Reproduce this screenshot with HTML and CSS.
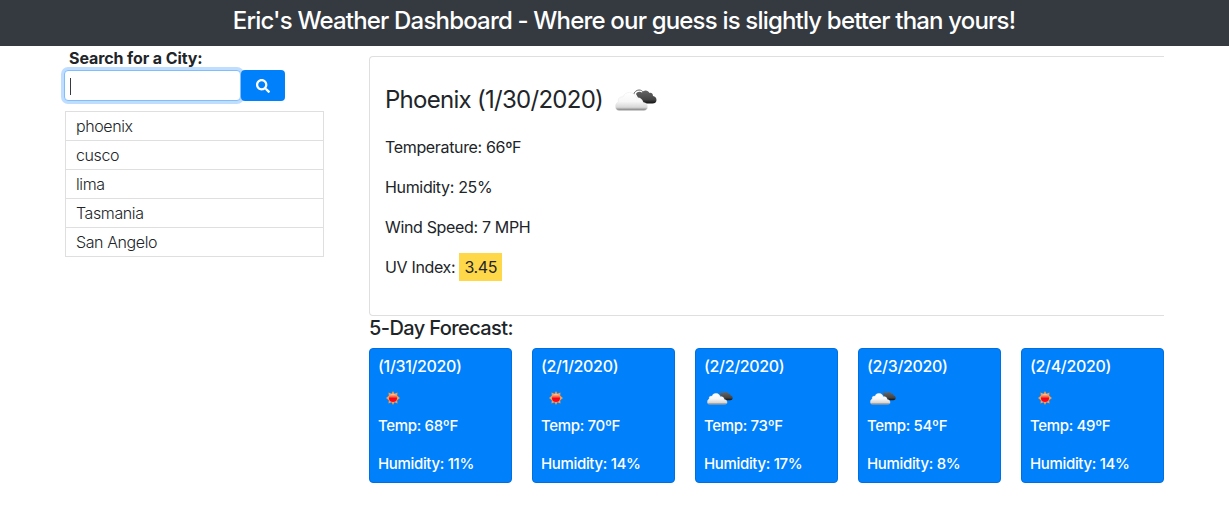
FILE: index.html
```
<!DOCTYPE html>
<html lang="en">
<head>
<meta charset="utf-8">
<title>Eric's Weather Dashboard</title>
<link rel="stylesheet" href="styles.css">
</head>
<body>
<svg class="defs" aria-hidden="true">
  <defs>
    <linearGradient id="white-cloud" x1="0" y1="0" x2="0" y2="1">
      <stop offset="0" stop-color="#fff"/>
      <stop offset=".5" stop-color="#f7f7f7"/>
      <stop offset=".82" stop-color="#d8d8d8"/>
      <stop offset="1" stop-color="#777"/>
    </linearGradient>
    <linearGradient id="dark-cloud" x1="0" y1="0" x2="0" y2="1">
      <stop offset="0" stop-color="#666"/>
      <stop offset=".7" stop-color="#444"/>
      <stop offset="1" stop-color="#111"/>
    </linearGradient>
    <linearGradient id="sun-core" x1="0" y1="0" x2="0" y2="1">
      <stop offset="0" stop-color="#ffd0a0"/>
      <stop offset=".35" stop-color="#fb6040"/>
      <stop offset=".55" stop-color="#f8001c"/>
      <stop offset="1" stop-color="#f8101c"/>
    </linearGradient>
    <symbol id="clouds" viewBox="0 0 42 22">
      <path d="M18.500 6C19 3 21.500 1 24 1C26 1 27.500 2 28 3" fill="none" stroke="#666" stroke-width="1"/>
      <path d="M21 5C22 2.500 25 2 27 3.500C28.500 .8 33 .4 34.500 4C36 3.400 38 4.500 38 7C40 7.500 41.500 8.800 41.500 11C41.500 13.400 39.700 14.500 37.500 14.500H29C27.500 11 25.500 9.500 23.500 9.500Z" fill="url(#dark-cloud)"/>
      <path d="M4.500 21.500C2 21.500 .5 20 .5 17.500C.5 15 2 13.300 3.500 12.800C2.500 9.500 5 7.300 8 8C9 5 11.500 3.500 14.500 3.500C18 3.500 20.500 5.800 21.500 9C24.500 8 27.500 10 28 13.500C31 13.500 32.500 15.500 32.500 18C32.500 20.200 31 21.500 28.500 21.500Z" fill="url(#white-cloud)" stroke="#e3e3e3" stroke-width=".4"/>
    </symbol>
    <symbol id="sun" viewBox="0 0 14 14">
      <path d="M7 0L8.400 2.700L11.500 1.600L11.200 4.800L14 7L11.200 9.200L11.500 12.400L8.400 11.300L7 14L5.600 11.300L2.500 12.400L2.800 9.200L0 7L2.800 4.800L2.500 1.600L5.600 2.700Z" fill="#f0a050"/>
      <circle cx="7" cy="7" r="4" fill="url(#sun-core)"/>
    </symbol>
  </defs>
</svg>
<header class="banner"><h1>Eric's Weather Dashboard - Where our guess is slightly better than yours!</h1></header>
<main class="page">
  <aside class="sidebar">
    <label class="search-label" for="city">Search for a City:</label>
    <div class="search">
      <div class="search-input" id="city"><span class="caret"></span></div>
      <button class="search-button" aria-label="Search">
        <svg class="search-icon" viewBox="0 0 512 512"><path fill="currentColor" d="M505 442.700L405.300 343c-4.500-4.500-10.600-7-17-7H372c27.600-35.300 44-79.700 44-128C416 93.100 322.900 0 208 0S0 93.100 0 208s93.100 208 208 208c48.300 0 92.700-16.400 128-44v16.300c0 6.400 2.500 12.500 7 17l99.700 99.700c9.400 9.400 24.600 9.400 33.900 0l28.300-28.300c9.400-9.400 9.400-24.600.1-34zM208 336c-70.700 0-128-57.200-128-128 0-70.700 57.200-128 128-128 70.700 0 128 57.200 128 128 0 70.700-57.200 128-128 128z"/></svg>
      </button>
    </div>
    <ul class="cities"><li>phoenix</li><li>cusco</li><li>lima</li><li>Tasmania</li><li>San Angelo</li></ul>
  </aside>
  <section class="content">
    <div class="current">
      <h2><span>Phoenix (1/30/2020)</span><svg class="current-icon"><use href="#clouds"/></svg></h2>
      <p>Temperature: 66ºF</p>
      <p>Humidity: 25%</p>
      <p>Wind Speed: 7 MPH</p>
      <p>UV Index: <span class="uv">3.45</span></p>
    </div>
    <h3>5-Day Forecast:</h3>
    <div class="forecast">
      <article class="day"><h4>(1/31/2020)</h4><svg class="sun"><use href="#sun"/></svg><p>Temp: 68ºF</p><p>Humidity: 11%</p></article>
      <article class="day"><h4>(2/1/2020)</h4><svg class="sun"><use href="#sun"/></svg><p>Temp: 70ºF</p><p>Humidity: 14%</p></article>
      <article class="day"><h4>(2/2/2020)</h4><svg class="clouds"><use href="#clouds"/></svg><p>Temp: 73ºF</p><p>Humidity: 17%</p></article>
      <article class="day"><h4>(2/3/2020)</h4><svg class="clouds"><use href="#clouds"/></svg><p>Temp: 54ºF</p><p>Humidity: 8%</p></article>
      <article class="day"><h4>(2/4/2020)</h4><svg class="sun"><use href="#sun"/></svg><p>Temp: 49ºF</p><p>Humidity: 14%</p></article>
    </div>
  </section>
</main>
</body>
</html>
```
FILE: styles.css
```
* { box-sizing: border-box; }
body { margin: 0; background: #fff; color: #212529; font: 400 16px/24px Inter, "Liberation Sans", sans-serif; letter-spacing: -0.4px; }
h1, h2, h3, h4, p, ul { margin: 0; padding: 0; }
svg { display: block; }
.defs { position: absolute; width: 0; height: 0; }
.banner { height: 46px; background: #343a40; color: #fff; padding: 6px 0 0 19px; text-align: center; }
.banner h1 { font-size: 24px; line-height: 30px; font-weight: 500; letter-spacing: -0.82px; white-space: nowrap; }
.page { display: flex; padding-left: 65px; }
.sidebar { width: 259px; margin-right: 45px; }
.search-label { display: block; height: 24px; padding-left: 4px; font-weight: 700; letter-spacing: -0.1px; white-space: nowrap; }
.search { display: flex; height: 31px; margin-left: -1px; }
.search-input { width: 177px; height: 31px; border: 1px solid #80bdff; border-radius: 4px; box-shadow: 0 0 0 3px #bfdeff; padding: 7px 5px; background: #fff; }
.caret { display: block; width: 1px; height: 17px; background: #343a40; }
.search-button { display: flex; align-items: center; justify-content: center; width: 44px; height: 31px; padding: 0; border: 0; border-radius: 4px; background: #0080fb; color: #fff; }
.search-icon { width: 14px; height: 14px; }
.cities { list-style: none; margin-top: 10px; border: 1px solid #dfdfdf; border-bottom: 0; font-weight: 300; }
.cities li { height: 29px; line-height: 29px; padding-left: 10px; border-bottom: 1px solid #dfdfdf; }
.content { width: 795px; padding-top: 10px; }
.current { height: 260px; border: 1px solid #dfdfdf; border-right: 0; border-radius: 4px 0 0 4px; padding: 28px 15px; letter-spacing: -0.34px; }
.current h2 { display: flex; align-items: center; gap: 12px; height: 30px; margin-bottom: 20px; font-size: 24px; line-height: 30px; font-weight: 400; letter-spacing: -0.72px; }
.current-icon { width: 42px; height: 22px; }
.current p { margin-bottom: 16px; }
.uv { display: inline-block; height: 28px; line-height: 28px; margin: -2px 0; padding: 0 5px; background: #ffd84a; }
.current p:last-child { margin: 0; }
h3 { height: 32px; font-size: 20px; line-height: 24px; font-weight: 500; letter-spacing: -0.6px; }
.forecast { display: grid; grid-template-columns: repeat(5, 143px); gap: 20px; }
.day { height: 135px; padding: 7px 8px; border: 1px solid #006fe0; border-radius: 4px; background: #0080fb; color: #fff; font-weight: 500; font-size: 15px; letter-spacing: -0.33px; }
.day h4 { height: 20px; line-height: 20px; font-size: 16px; font-weight: 500; }
.day p { height: 24px; line-height: 24px; margin-bottom: 14px; white-space: nowrap; }
.day .sun { width: 14px; height: 14px; margin: 15px 0 9px 8px; }
.day .clouds { width: 26px; height: 14px; margin: 15px 0 9px 3px; }
```
